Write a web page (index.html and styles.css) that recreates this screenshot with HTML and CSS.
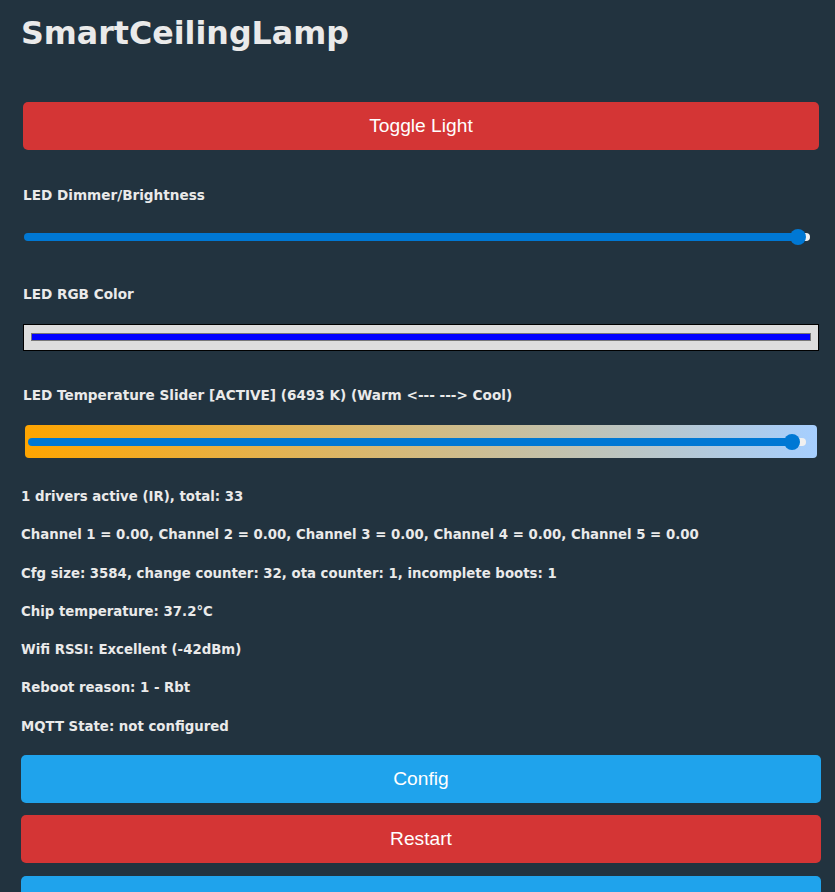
FILE: index.html
```html
<!DOCTYPE html>
<html>
<head>
<meta charset="utf-8">
<title>SmartCeilingLamp</title>
<link rel="stylesheet" href="styles.css">
</head>
<body>
<div class="page">
  <h1 class="title">SmartCeilingLamp</h1>
  <button class="btn btn-red btn-toggle">Toggle Light</button>

  <h5 class="label label-dimmer">LED Dimmer/Brightness</h5>
  <input class="range range-dimmer" type="range" min="0" max="1000" value="995">

  <h5 class="label label-rgb">LED RGB Color</h5>
  <input class="color" type="color" value="#0000ff">

  <h5 class="label label-temp">LED Temperature Slider [ACTIVE] (6493 K) (Warm &lt;--- ---&gt; Cool)</h5>
  <div class="temp-box">
    <input class="range range-temp" type="range" min="0" max="1000" value="992">
  </div>

  <div class="info">
    <h5 class="line">1 drivers active (IR), total: 33</h5>
    <h5 class="line">Channel 1 = 0.00, Channel 2 = 0.00, Channel 3 = 0.00, Channel 4 = 0.00, Channel 5 = 0.00</h5>
    <h5 class="line">Cfg size: 3584, change counter: 32, ota counter: 1, incomplete boots: 1</h5>
    <h5 class="line">Chip temperature: 37.2°C</h5>
    <h5 class="line">Wifi RSSI: Excellent (-42dBm)</h5>
    <h5 class="line">Reboot reason: 1 - Rbt</h5>
    <h5 class="line">MQTT State: not configured</h5>
  </div>

  <div class="buttons">
    <button class="btn btn-blue">Config</button>
    <button class="btn btn-red">Restart</button>
    <button class="btn btn-blue btn-last">Launch Web Application</button>
  </div>
</div>
</body>
</html>
```
FILE: styles.css
```css
html, body {
  margin: 0;
  padding: 0;
  background: #22333f;
}
body {
  color: #eaeaea;
  font-family: "DejaVu Sans", Verdana, sans-serif;
}
.page {
  width: 800px;
  margin-left: 21px;
  display: flex;
  flex-direction: column;
  align-items: stretch;
}
.title {
  margin: 13px 0 0 0;
  height: 40px;
  line-height: 40px;
  font-size: 31.7px;
  font-weight: bold;
  color: #eaeaea;
}
.btn {
  display: block;
  height: 48px;
  border: 0;
  border-radius: 5px;
  color: #ffffff;
  font-family: "Liberation Sans", Arial, sans-serif;
  font-size: 19.2px;
  line-height: 48px;
  padding: 0;
  text-align: center;
  width: 100%;
}
.btn-red { background: #d43535; }
.btn-blue { background: #1fa3ec; }
.btn-toggle {
  margin: 49px 2px 0 2px;
  width: auto;
}
.btn-last {
  line-height: 60px;
}
.label {
  margin: 0 0 0 2px;
  font-size: 13.6px;
  line-height: 16px;
  height: 16px;
  font-weight: bold;
  color: #eaeaea;
  white-space: nowrap;
}
.label-dimmer { margin-top: 37px; }
.label-rgb { margin-top: 41px; }
.label-temp { margin-top: 36px; }

.range {
  -webkit-appearance: none;
  appearance: none;
  height: 16px;
  margin: 0;
  padding: 0;
  background: transparent;
  display: block;
}
.range::-webkit-slider-runnable-track {
  height: 8px;
  border-radius: 4px;
}
.range::-webkit-slider-thumb {
  -webkit-appearance: none;
  appearance: none;
  width: 16px;
  height: 16px;
  border-radius: 50%;
  background: #0078d4;
  margin-top: -4px;
  border: 0;
}
.range-dimmer {
  margin: 26px 0 0 3px;
  width: 786px;
}
.range-dimmer::-webkit-slider-runnable-track {
  background: linear-gradient(to right, #0078d4 0, #0078d4 98.4%, #f0f0f0 98.4%, #f0f0f0 100%);
}
.color {
  -webkit-appearance: none;
  appearance: none;
  box-sizing: border-box;
  margin: 22px 2px 0 2px;
  height: 27px;
  width: 796px;
  padding: 8px 7px 9px 7px;
  border: 1px solid #000;
  background: #dddddd;
  border-radius: 0;
  display: block;
}
.color::-webkit-color-swatch-wrapper {
  padding: 0;
}
.color::-webkit-color-swatch {
  border: 1px solid #777;
  border-radius: 0;
}
.temp-box {
  margin: 22px 4px 0 4px;
  height: 33px;
  width: 792px;
  border-radius: 4px;
  background: linear-gradient(to right, #ffa500, #a6cfff);
  display: flex;
  align-items: center;
  padding-left: 3px;
  box-sizing: border-box;
}
.range-temp {
  width: 778px;
}
.range-temp::-webkit-slider-runnable-track {
  background: linear-gradient(to right, #0078d4 0, #0078d4 98.7%, #f0f0f0 98.7%, #f0f0f0 100%);
}
.info {
  margin-top: 31px;
  display: flex;
  flex-direction: column;
  gap: 22.3px;
}
.line {
  margin: 0;
  font-size: 13.3px;
  line-height: 16px;
  height: 16px;
  font-weight: bold;
  color: #eaeaea;
  white-space: nowrap;
}
.buttons {
  margin-top: 20px;
  display: flex;
  flex-direction: column;
  gap: 12.5px;
}
```
